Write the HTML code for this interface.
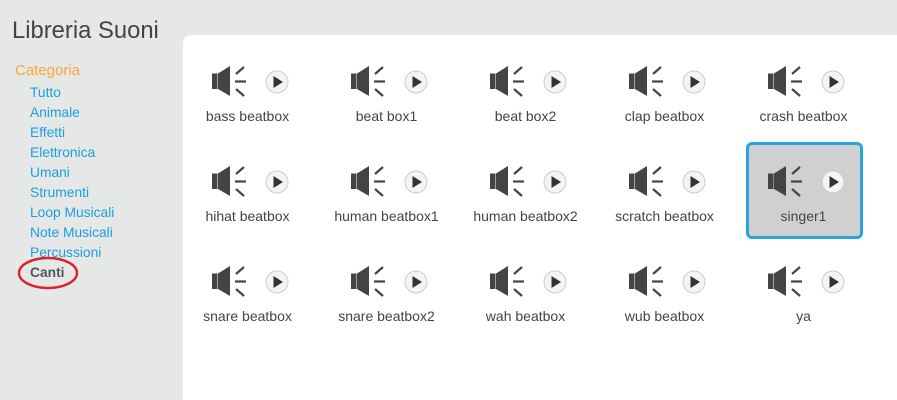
<!DOCTYPE html><html><head><style>
body{margin:0;width:897px;height:400px;background:#e6e7e7;font-family:"Liberation Sans",sans-serif;position:relative;overflow:hidden}
h1{position:absolute;left:12px;top:17px;margin:0;font-weight:normal;font-size:23.8px;color:#444}
.cat{position:absolute;left:15px;top:62px;font-size:15px;color:#f9a63a}
.list{position:absolute;left:30px;top:83px;font-size:13.8px;line-height:20px;color:#1a9fdc}
.list div:last-child{color:#555;font-weight:bold}
.panel{position:absolute;left:183px;top:35px;right:0;bottom:0;background:#fff;border-top-left-radius:8px}
.it{position:absolute;width:139px;height:100px;text-align:center}
.it svg{position:absolute;left:0;top:0}
.lb{position:absolute;left:0;width:139px;top:44px;font-size:14px;color:#444}
.sel{position:absolute;left:746px;top:142px;width:111px;height:91px;border:3px solid #2aa4dc;border-radius:6px;background:#d0d0d0}
</style></head><body>
<h1>Libreria Suoni</h1>
<div class="cat">Categoria</div>
<div class="list"><div>Tutto</div><div>Animale</div><div>Effetti</div><div>Elettronica</div><div>Umani</div><div>Strumenti</div><div>Loop Musicali</div><div>Note Musicali</div><div>Percussioni</div><div>Canti</div></div>
<svg style="position:absolute;left:17px;top:255px" width="64" height="38"><ellipse cx="31" cy="18" rx="29" ry="15" fill="none" stroke="#d8262a" stroke-width="2.5"/></svg>
<div class="panel"></div>
<div class="sel"></div>
<div id="g"></div>
<script>
var n=["bass beatbox","beat box1","beat box2","clap beatbox","crash beatbox","hihat beatbox","human beatbox1","human beatbox2","scratch beatbox","singer1","snare beatbox","snare beatbox2","wah beatbox","wub beatbox","ya"];
var h="";
n.forEach(function(t,i){var c=i%5,r=Math.floor(i/5);var x=178+c*139,y=64+r*100;
h+='<div class="it" style="left:'+x+'px;top:'+y+'px"><svg width="139" height="40"><rect x="34" y="9.5" width="5.5" height="15.5" fill="#444"/><path d="M40 9.5 L52 2 L52 32 L40 25Z" fill="#444"/><g stroke="#444" stroke-width="2.2"><line x1="58" y1="10" x2="66" y2="3"/><line x1="57" y1="17.5" x2="68" y2="17.5"/><line x1="58" y1="25" x2="66" y2="32"/></g><circle cx="99" cy="18" r="11" fill="#f4f4f4" stroke="#ccc"/><path d="M95.5 12 L105 18 L95.5 24Z" fill="#333"/></svg><div class="lb">'+t+'</div></div>';});
document.getElementById("g").innerHTML=h;
</script>
</body></html>
